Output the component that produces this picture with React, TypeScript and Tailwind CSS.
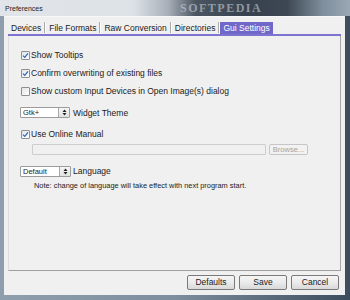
import React from "react";

const Check = ({ checked }: { checked: boolean }) => (
  <span className="w-[9px] h-[9px] border border-[#8e8f8f] bg-gradient-to-br from-[#e4e4e4] to-white flex items-center justify-center rounded-[1px] shrink-0">
    {checked && (
      <svg width="7" height="7" viewBox="0 0 7 7">
        <path d="M1 3.6 L2.8 5.4 L6 1.4" stroke="#2c67bd" strokeWidth="1.3" fill="none" />
      </svg>
    )}
  </span>
);

const CheckRow = ({ checked, label, cls }: { checked: boolean; label: string; cls: string }) => (
  <div className={"flex items-center h-[12px] ml-[12px] gap-[1px] " + cls}>
    <Check checked={checked} />
    <span className="text-[8.5px] leading-[12px] text-[#1b1b1b] whitespace-nowrap">{label}</span>
  </div>
);

const Arrows = () => (
  <svg width="5" height="7" viewBox="0 0 5 7">
    <path d="M0.5 3 L2.5 0.6 L4.5 3Z M0.5 4 L2.5 6.4 L4.5 4Z" fill="#222" />
  </svg>
);

const Combo = ({ value, w }: { value: string; w: string }) => (
  <div className={"flex h-[11px] border border-[#9c9c9c] bg-white rounded-[1px] " + w}>
    <span className="flex-1 pl-[2px] text-[7.5px] leading-[9px] text-[#1b1b1b]">{value}</span>
    <span className="w-[11px] border-l border-[#a8a8a8] bg-gradient-to-b from-[#f6f6f6] to-[#e2e2e2] flex items-center justify-center">
      <Arrows />
    </span>
  </div>
);

const Btn = ({ label, w }: { label: string; w: string }) => (
  <div
    className={
      "h-[15px] border border-[#7a7a7a] rounded-[2px] bg-gradient-to-b from-[#f5f5f5] via-[#ebebeb] to-[#d8d8d8] flex items-center justify-center text-[8.5px] text-[#1b1b1b] " +
      w
    }
  >
    {label}
  </div>
);

const Sep = () => (
  <span className="flex h-[11px] self-center">
    <span className="w-[1px] bg-[#a9a9a9]" />
    <span className="w-[1px] bg-white" />
  </span>
);

export default function App() {
  const tabs = ["Devices", "File Formats", "Raw Conversion", "Directories"];
  return (
    <div className="w-[350px] h-[300px] overflow-hidden flex flex-col font-['Liberation_Sans',Arial,sans-serif] bg-[linear-gradient(90deg,#8e9eac_0%,#7d8e9e_50%,#3c4d5e_100%)]">
      {/* title bar */}
      <div className="h-[16px] shrink-0 relative overflow-hidden flex items-center pl-[5px] bg-[linear-gradient(90deg,#e1e5e9_0%,#dde2e7_38%,#a7afb8_48%,#4a5561_56%,#38424e_70%,#3d4753_82%,#7e8d9b_92%,#9aa8b5_100%)]">
        <span className="text-[7px] leading-[10px] text-[#1d1d1d] mt-[2px]">Preferences</span>
        <span className="absolute left-[180px] top-[1px] text-[12px] leading-[14px] font-bold tracking-[1.5px] text-[#c9ced4] opacity-60 font-['Liberation_Serif',serif]">
          SOFTPEDIA
        </span>
      </div>
      {/* client */}
      <div className="flex-1 flex flex-col ml-[4px] mr-[5px] mb-[5px] bg-[#f0f0f0] border-t border-[#f8f8f8]">
        {/* tabs */}
        <div className="flex items-end pt-[4px] pl-[4px] h-[17px] shrink-0">
          {tabs.map((t) => (
            <React.Fragment key={t}>
              <div className="h-[12px] px-[3px] flex items-center text-[8.5px] leading-[12px] text-[#1b1b1b] whitespace-nowrap">
                {t}
              </div>
              <Sep />
            </React.Fragment>
          ))}
          <div className="h-[12px] px-[3px] flex items-center text-[8.5px] leading-[12px] text-white bg-[#7067c9] whitespace-nowrap">
            Gui Settings
          </div>
        </div>
        <div className="h-[2px] mx-[4px] bg-[#7d74cf] shrink-0" />
        {/* panel */}
        <div className="h-[235px] mx-[4px] shrink-0 flex flex-col border-l border-[#dedede] border-r border-r-[#a8a8a8] border-b border-b-[#a0a0a0]">
          <CheckRow checked label="Show Tooltips" cls="mt-[13px]" />
          <CheckRow checked label="Confirm overwriting of existing files" cls="mt-[6px]" />
          <CheckRow checked={false} label="Show custom Input Devices in Open Image(s) dialog" cls="mt-[6px]" />
          <div className="flex items-center gap-[3px] ml-[11px] mt-[10px] h-[11px]">
            <Combo value="Gtk+" w="w-[50px]" />
            <span className="text-[8.5px] leading-[12px] text-[#1b1b1b]">Widget Theme</span>
          </div>
          <CheckRow checked label="Use Online Manual" cls="mt-[10px]" />
          <div className="flex items-center ml-[23px] mt-[4px] h-[11px] gap-[3px]">
            <div className="w-[234px] h-[11px] border border-[#cdcdcd] bg-[#f0f0f0] rounded-[1px]" />
            <div className="w-[39px] h-[11px] border border-[#c6c6c6] rounded-[2px] bg-[#f2f2f2] flex items-center justify-center text-[7.5px] text-[#a3a3a3]">
              Browse...
            </div>
          </div>
          <div className="flex items-center gap-[2px] ml-[11px] mt-[10px] h-[12px]">
            <Combo value="Default" w="w-[51px]" />
            <span className="text-[8.5px] leading-[12px] text-[#1b1b1b]">Language</span>
          </div>
          <div className="ml-[25px] mt-[4px] text-[7.4px] leading-[9px] text-[#1b1b1b] whitespace-nowrap">
            Note: change of language will take effect with next program start.
          </div>
        </div>
        {/* buttons */}
        <div className="flex justify-end gap-[4px] mt-[4px] pr-[6px] shrink-0">
          <Btn label="Defaults" w="w-[48px]" />
          <Btn label="Save" w="w-[48px]" />
          <Btn label="Cancel" w="w-[48px]" />
        </div>
      </div>
    </div>
  );
}
